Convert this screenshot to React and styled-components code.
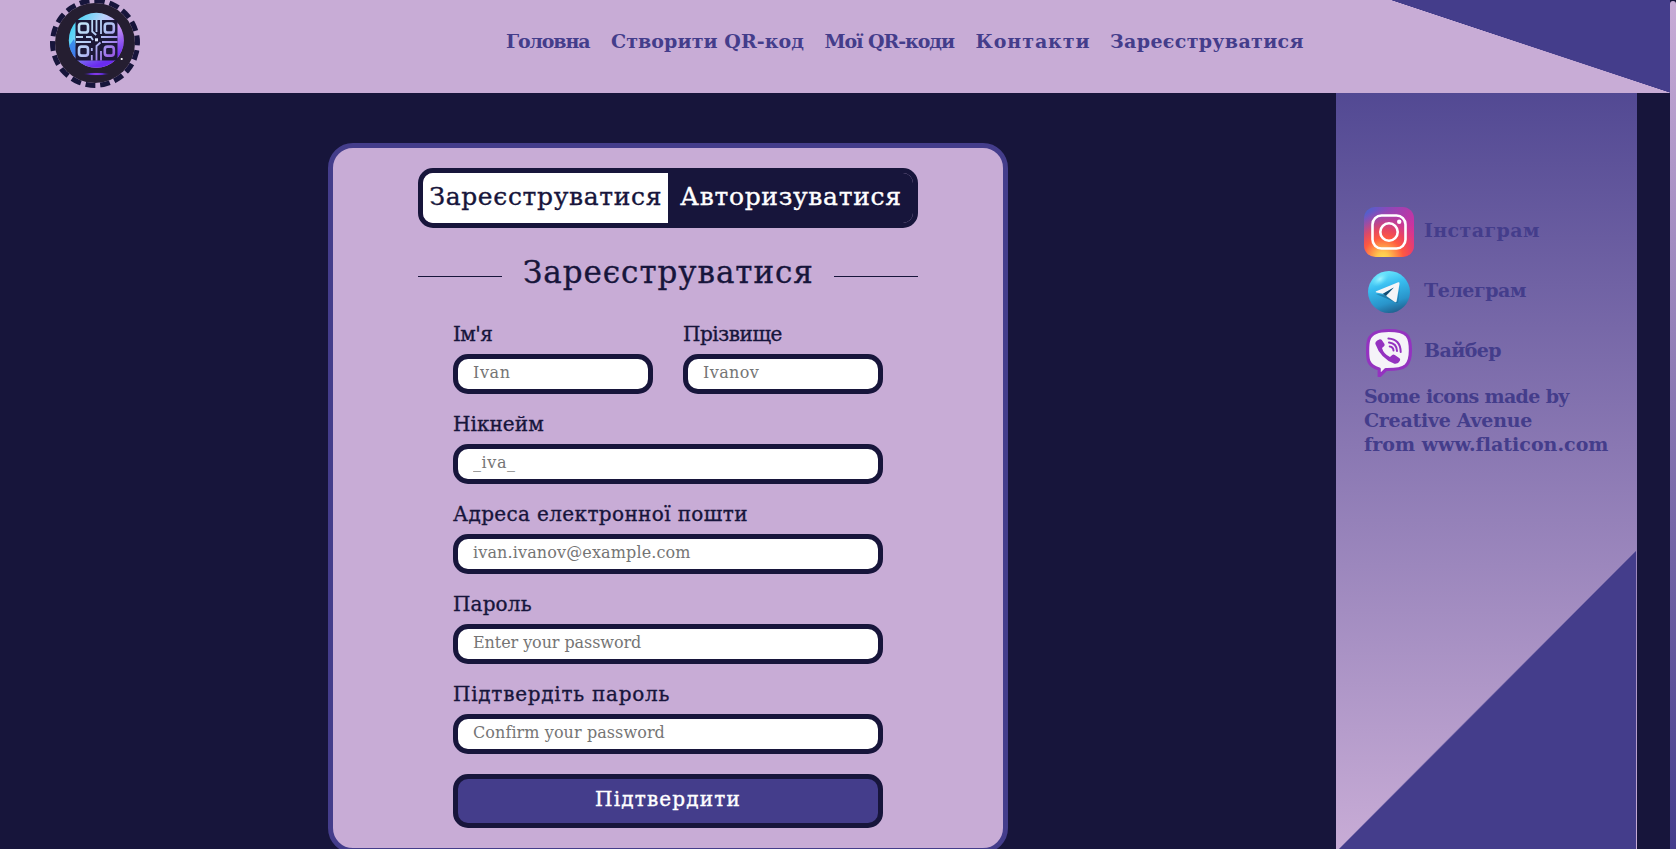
import React from "react";
import styled, { createGlobalStyle, css } from "styled-components";

const night = "#17153b";
const indigo = "#443d8b";
const lilac = "#c8acd6";

const GlobalStyle = createGlobalStyle`
  *, *::before, *::after { box-sizing: border-box; }
  body {
    margin: 0;
    overflow: hidden;
    background: ${night};
    font-family: "DejaVu Serif", serif;
    color: ${night};
  }
`;

const tracking = css`
  letter-spacing: ${(p) => p.$track || 0}px;
  margin-right: ${(p) => -(p.$track || 0)}px;
`;

const Page = styled.div`
  display: flex;
  height: 849px;
  overflow: hidden;
`;

const Content = styled.div`
  flex: 1;
  display: flex;
  flex-direction: column;
  min-width: 0;
`;

const Scrollbar = styled.div`
  flex: none;
  width: 6px;
  padding-top: 1px;
`;

const Thumb = styled.div`
  height: 848px;
  border-radius: 3px 3px 0 0;
  background: linear-gradient(${lilac}, ${indigo});
`;

const Header = styled.header`
  flex: none;
  display: flex;
  align-items: center;
  height: 93px;
  padding: 0 0 7px 50px;
  background: linear-gradient(to top right, transparent 50%, ${indigo} 50.3%) right top / 280px 93px no-repeat ${lilac};
`;

const Logo = styled.a`
  flex: none;
  width: 90px;
  height: 90px;
  border: 5px dashed ${night};
  border-radius: 50%;

  svg { display: block; }
`;

const Nav = styled.nav`
  display: flex;
  gap: 20.5px;
  margin: 0 0 5px 366px;
`;

const NavLink = styled.a`
  font-size: 19px;
  line-height: 24px;
  font-weight: 700;
  color: ${indigo};
  white-space: nowrap;
  ${tracking}
`;

const Body = styled.div`
  flex: 1;
  display: flex;
  min-height: 0;
`;

const Main = styled.main`
  width: 1336px;
  display: flex;
  justify-content: center;
  align-items: flex-start;
  padding-top: 50px;
`;

const Card = styled.section`
  display: flex;
  flex-direction: column;
  align-items: center;
  width: 680px;
  height: 710px;
  padding-top: 20px;
  border: 5px solid ${indigo};
  border-radius: 25px;
  background: ${lilac};
`;

const Tabs = styled.div`
  display: flex;
  width: 500px;
  height: 60px;
  border: 5px solid ${night};
  border-radius: 15px;
  overflow: hidden;
`;

const Tab = styled.div`
  flex: 1;
  display: flex;
  align-items: center;
  justify-content: center;
  padding-bottom: 3px;
  font-size: 25px;
  color: ${(p) => (p.$active ? night : "#fff")};
  background: ${(p) => (p.$active ? "#fff" : night)};
  -webkit-text-stroke: 0.35px;
`;

const TabText = styled.span`
  ${tracking}
`;

const TitleRow = styled.div`
  display: flex;
  align-items: center;
  gap: 20px;
  width: 500px;
  height: 96px;

  &::before, &::after {
    content: "";
    flex: 1;
    height: 1px;
    background: ${night};
  }
`;

const Title = styled.h1`
  width: 292px;
  margin: 0;
  padding: 0 0 8px 1px;
  font-size: 31px;
  font-weight: 400;
  letter-spacing: 0.95px;
  white-space: nowrap;
  -webkit-text-stroke: 0.35px;
`;

const Form = styled.form`
  display: grid;
  grid-template-columns: 200px 200px;
  column-gap: 30px;
  row-gap: 20px;
  width: 430px;
`;

const Field = styled.label`
  display: flex;
  flex-direction: column;
  gap: 10px;
  grid-column: ${(p) => (p.$half ? "auto" : "1 / -1")};
`;

const Label = styled.span`
  font-size: 20px;
  line-height: 20px;
  white-space: nowrap;
  -webkit-text-stroke: 0.35px;
  ${tracking}
`;

const Input = styled.input`
  width: 100%;
  height: 40px;
  padding: 0 15px 3px;
  border: 5px solid ${night};
  border-radius: 15px;
  background: #fff;
  font: 16px "DejaVu Serif", serif;
  letter-spacing: ${(p) => p.$track || 0}px;
  outline: none;

  &::placeholder { color: #757575; }
`;

const Submit = styled.button`
  grid-column: 1 / -1;
  height: 54px;
  padding: 0 0 4px;
  border: 5px solid ${night};
  border-radius: 15px;
  background: ${indigo};
  color: #fff;
  font: 20px "DejaVu Serif", serif;
  letter-spacing: 1.15px;
  -webkit-text-stroke: 0.4px;
`;

const Sidebar = styled.aside`
  width: 301px;
  padding: 109px 0 0 28px;
  background:
    linear-gradient(to bottom right, transparent 50%, ${indigo} 50.3%) 1px 457px / 299px 300px no-repeat,
    linear-gradient(${indigo}, ${lilac}) 0 -93px / 100% 849px no-repeat;
`;

const Social = styled.a`
  display: flex;
  align-items: center;
  gap: 10px;
  height: 60px;

  svg { flex: none; display: block; }
`;

const SideText = styled.span`
  display: block;
  font-size: 19px;
  line-height: 24px;
  font-weight: 700;
  color: ${indigo};
  white-space: nowrap;
  ${tracking}
`;

const SocialName = styled(SideText)`
  padding-bottom: 4px;
`;

const Credits = styled.div`
  padding-top: 2px;
`;

const Finder = ({ x, y }) => (
  <rect x={x} y={y} width="9" height="9" rx="2.6" fill="none" stroke="url(#qr)" strokeWidth="2.6" />
);

const LogoMark = () => (
  <svg width="80" height="80" viewBox="0 0 80 80">
    <defs>
      <linearGradient id="disc" x1="0" y1="0.2" x2="1" y2="0.7">
        <stop offset="0" stopColor="#35d4f5" />
        <stop offset="0.45" stopColor="#b8d3fb" />
        <stop offset="1" stopColor="#e87af4" />
      </linearGradient>
      <linearGradient id="shade" x1="0" y1="0" x2="0.4" y2="1">
        <stop offset="0.5" stopColor="#3a38e8" stopOpacity="0" />
        <stop offset="1" stopColor="#6a2cf0" />
      </linearGradient>
      <linearGradient id="qr" gradientUnits="userSpaceOnUse" x1="20" y1="17" x2="62" y2="58">
        <stop offset="0" stopColor="#c4edf9" />
        <stop offset="0.5" stopColor="#b3c4f4" />
        <stop offset="1" stopColor="#8f3ce0" />
      </linearGradient>
      <radialGradient id="glow">
        <stop offset="0" stopColor="#b84cff" />
        <stop offset="0.5" stopColor="#5a2bd0" />
        <stop offset="1" stopColor="#241b30" stopOpacity="0" />
      </radialGradient>
    </defs>
    <circle cx="40" cy="40" r="40" fill="#251e31" />
    <circle cx="41.3" cy="37.3" r="27.5" fill="url(#disc)" />
    <circle cx="41.3" cy="37.3" r="27.5" fill="url(#shade)" />
    <path d="M14 43 19 36 24 56 18 52Z" fill="#256fe9" opacity=".7" />
    <rect x="20.5" y="17" width="42" height="40.5" fill="#1c1838" />
    <Finder x="24" y="20.5" />
    <Finder x="49.8" y="20.5" />
    <Finder x="24" y="43.6" />
    <Finder x="49.8" y="43.6" />
    <path
      d="M37.2 17v11.5l4 3.5M41.5 17v12M46 17v14M21 34h7M31 34h5l2 3M21 39h15M46 34h16.5M47 39h15.5M36.8 57.5V52M36.8 48v-3M41.5 57.5V43l4-3.5M46 48v9.5"
      fill="none" stroke="url(#qr)" strokeWidth="1.8"
    />
    <rect x="40" y="35.3" width="3" height="3" fill="#dbe6ff" />
    <ellipse cx="41.5" cy="71" rx="14" ry="1.8" fill="url(#glow)" />
    <circle cx="66.7" cy="56" r="1.1" fill="#fff" />
  </svg>
);

const InstagramIcon = () => (
  <svg width="50" height="50" viewBox="0 0 50 50">
    <defs>
      <linearGradient id="igBase" x1="0" y1="0" x2="1" y2="0.5">
        <stop offset="0.05" stopColor="#4d62cf" />
        <stop offset="0.4" stopColor="#8d48b8" />
        <stop offset="1" stopColor="#cf309f" />
      </linearGradient>
      <radialGradient id="igWarm" gradientUnits="userSpaceOnUse" cx="19" cy="51" r="48">
        <stop offset="0" stopColor="#ffdc55" />
        <stop offset="0.12" stopColor="#ffc84e" />
        <stop offset="0.42" stopColor="#ff5a40" />
        <stop offset="0.6" stopColor="#f7484f" stopOpacity="0.8" />
        <stop offset="1" stopColor="#d9359a" stopOpacity="0" />
      </radialGradient>
    </defs>
    <rect width="50" height="50" rx="11.5" fill="url(#igBase)" />
    <rect width="50" height="50" rx="11.5" fill="url(#igWarm)" />
    <g fill="none" stroke="#fff" strokeWidth="2.6">
      <rect x="8.5" y="8.5" width="33" height="33" rx="9" />
      <circle cx="25" cy="25" r="8.7" />
    </g>
    <circle cx="35.2" cy="14.8" r="2.2" fill="#fff" />
  </svg>
);

const TelegramIcon = () => (
  <svg width="50" height="50" viewBox="0 0 50 50">
    <defs>
      <linearGradient id="tgBall" x1="0.3" y1="0" x2="0.6" y2="1">
        <stop offset="0" stopColor="#6feaff" />
        <stop offset="0.35" stopColor="#38bdf0" />
        <stop offset="0.75" stopColor="#2994ca" />
        <stop offset="1" stopColor="#20618f" />
      </linearGradient>
      <radialGradient id="tgShine">
        <stop offset="0" stopColor="#a5f4ff" />
        <stop offset="1" stopColor="#65e3ff" stopOpacity="0" />
      </radialGradient>
    </defs>
    <circle cx="25" cy="25" r="21" fill="url(#tgBall)" />
    <ellipse cx="16" cy="12" rx="10" ry="6" transform="rotate(-35 16 12)" fill="url(#tgShine)" />
    <path d="M12 27 23 28 34 36 36 18 33 36Z" fill="#14577f" opacity=".5" />
    <path d="M12.2 24.3 34.2 15.3Q35.7 15 35.5 16.7L32.6 34.2Q32 36 30.4 34.8L22 28.7 29.8 20.5 19 26.8 12.5 25.6Q10.8 25 12.2 24.3Z" fill="#f5f5f7" />
    <path d="M29.8 20.5 22 28.7 19 26.8Z" fill="#174c72" />
  </svg>
);

const ViberIcon = () => (
  <svg width="50" height="50" viewBox="0 0 50 50">
    <path
      d="M24.8 3.5C36 3.5 40 5.2 43 8.5 46 12 46.4 17 46.4 23.5 46.4 30 45.4 35.4 41.8 38.6 38 42 31 42.6 22 42.5L15.2 49.2V42C9.5 40.6 6.5 38.2 4.9 34.5 3.2 30.5 3.2 17 4.9 12.5 7.2 6.2 13 3.5 24.8 3.5Z"
      fill="#f5f3f8" stroke="#9432c0" strokeWidth="3.2" strokeLinejoin="round"
    />
    <path
      d="M13.2 13.4 15.8 12.2Q17 12 17.8 13L20.5 17Q21 18.3 20 19.3L18 21Q19.5 27 26 30L28.2 28Q29.4 27 30.8 28L35.5 31.3Q36.6 32.3 35.9 33.7 34 37.4 30.5 36.7 16.5 31.5 11.3 16.7 11.1 14.7 13.2 13.4Z"
      fill="#9432c0"
    />
    <path d="M24.4 11.5C32.3 12 36.5 16.5 36.7 25M25 15.5C30 16 32.8 19 33 24M25.7 19.4C28.2 19.6 29.3 21 29.5 23.5" fill="none" stroke="#9432c0" strokeWidth="2" strokeLinecap="round" />
  </svg>
);

const links = [
  ["Головна", -1.13],
  ["Створити QR-код", 0.08],
  ["Мої QR-коди", -1.04],
  ["Контакти", 0.92],
  ["Зареєструватися", 0.34],
];

const fields = [
  { label: "Ім'я", track: -0.6, hint: "Ivan", hintTrack: 0.6, half: true },
  { label: "Прізвище", track: -0.45, hint: "Ivanov", hintTrack: 0.4, half: true },
  { label: "Нікнейм", track: 0.05, hint: "_iva_", hintTrack: 0.6 },
  { label: "Адреса електронної пошти", track: 0.36, hint: "ivan.ivanov@example.com", hintTrack: 0.13 },
  { label: "Пароль", track: 0.15, hint: "Enter your password", hintTrack: -0.08, type: "password" },
  { label: "Підтвердіть пароль", track: 0.74, hint: "Confirm your password", hintTrack: 0.08, type: "password" },
];

const socials = [
  ["Інстаграм", 0.4, InstagramIcon],
  ["Телеграм", -0.42, TelegramIcon],
  ["Вайбер", -0.6, ViberIcon],
];

const credits = [
  ["Some icons made by", -0.66],
  ["Creative Avenue", -0.27],
  ["from www.flaticon.com", 0.02],
];

export default function App() {
  return (
    <Page>
      <GlobalStyle />
      <Content>
        <Header>
          <Logo><LogoMark /></Logo>
          <Nav>
            {links.map(([text, track]) => (
              <NavLink key={text} $track={track}>{text}</NavLink>
            ))}
          </Nav>
        </Header>
        <Body>
          <Main>
            <Card>
              <Tabs>
                <Tab $active><TabText $track={0.64}>Зареєструватися</TabText></Tab>
                <Tab><TabText $track={0.67}>Авторизуватися</TabText></Tab>
              </Tabs>
              <TitleRow>
                <Title>Зареєструватися</Title>
              </TitleRow>
              <Form>
                {fields.map((f) => (
                  <Field key={f.label} $half={f.half}>
                    <Label $track={f.track}>{f.label}</Label>
                    <Input type={f.type || "text"} placeholder={f.hint} $track={f.hintTrack} />
                  </Field>
                ))}
                <Submit type="button">Підтвердити</Submit>
              </Form>
            </Card>
          </Main>
          <Sidebar>
            {socials.map(([text, track, Icon]) => (
              <Social key={text}>
                <Icon />
                <SocialName $track={track}>{text}</SocialName>
              </Social>
            ))}
            <Credits>
              {credits.map(([text, track]) => (
                <SideText key={text} $track={track}>{text}</SideText>
              ))}
            </Credits>
          </Sidebar>
        </Body>
      </Content>
      <Scrollbar><Thumb /></Scrollbar>
    </Page>
  );
}
